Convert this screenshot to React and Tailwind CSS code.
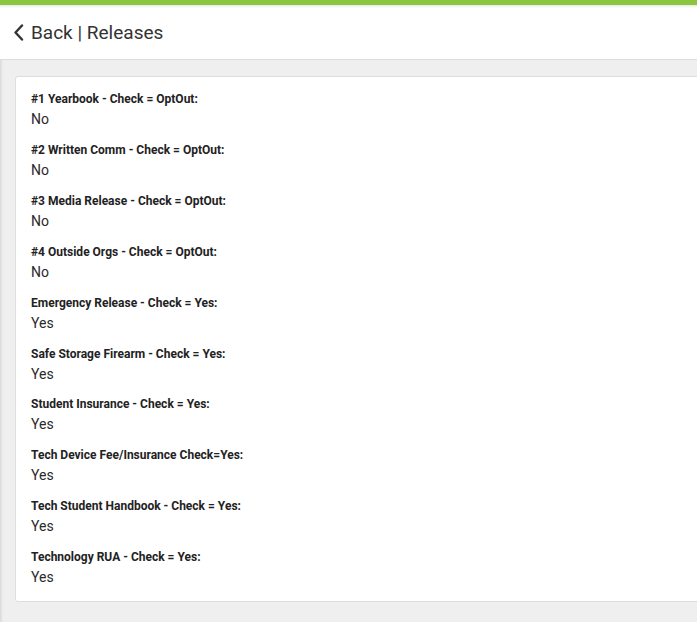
const releases = [
  { label: '#1 Yearbook - Check = OptOut:', value: 'No' },
  { label: '#2 Written Comm - Check = OptOut:', value: 'No' },
  { label: '#3 Media Release - Check = OptOut:', value: 'No' },
  { label: '#4 Outside Orgs - Check = OptOut:', value: 'No' },
  { label: 'Emergency Release - Check = Yes:', value: 'Yes' },
  { label: 'Safe Storage Firearm - Check = Yes:', value: 'Yes' },
  { label: 'Student Insurance - Check = Yes:', value: 'Yes' },
  { label: 'Tech Device Fee/Insurance Check=Yes:', value: 'Yes' },
  { label: 'Tech Student Handbook - Check = Yes:', value: 'Yes' },
  { label: 'Technology RUA - Check = Yes:', value: 'Yes' },
]

export default function App() {
  return (
    <div className="min-h-screen bg-[#efefef] overflow-hidden font-['Roboto',sans-serif] text-[#333] shadow-[inset_3px_0_3px_-2px_rgba(0,0,0,0.12)]">
      {/* Top accent */}
      <div className="h-[5px] bg-[#8cc63f]" />

      {/* Header */}
      <div className="h-[55px] bg-white border-b border-[#dcdcdc] flex items-center pl-[13px] shadow-[inset_0_3px_3px_-2px_rgba(0,0,0,0.12)]">
        <svg width="11" height="17" viewBox="0 0 11 17" className="mt-[1px]">
          <path d="M9 1.5 L2.5 8.5 L9 15.5" fill="none" stroke="#333" strokeWidth="2.4" strokeLinecap="round" strokeLinejoin="round" />
        </svg>
        <span className="ml-[7px] text-[19px] leading-none text-[#333] mt-[1px]">Back | Releases</span>
      </div>

      {/* Card */}
      <div className="pt-[16px] pl-[15px]">
        <div className="mr-[-10px] bg-white border border-[#dedede] rounded-[3px] pl-[15px] pt-[13px] pb-[14px]">
          <div className="flex flex-col gap-[12px]">
            {releases.map((r, i) => (
              <div key={i} className={i > 0 ? '-mt-[0.1px]' : ''}>
                <div className="text-[12px] leading-[18px] font-bold text-[#222]">{r.label}</div>
                <div className="mt-[1px] text-[14px] leading-[20px] text-[#2a2a2a]">{r.value}</div>
              </div>
            ))}
          </div>
        </div>
      </div>
    </div>
  )
}
